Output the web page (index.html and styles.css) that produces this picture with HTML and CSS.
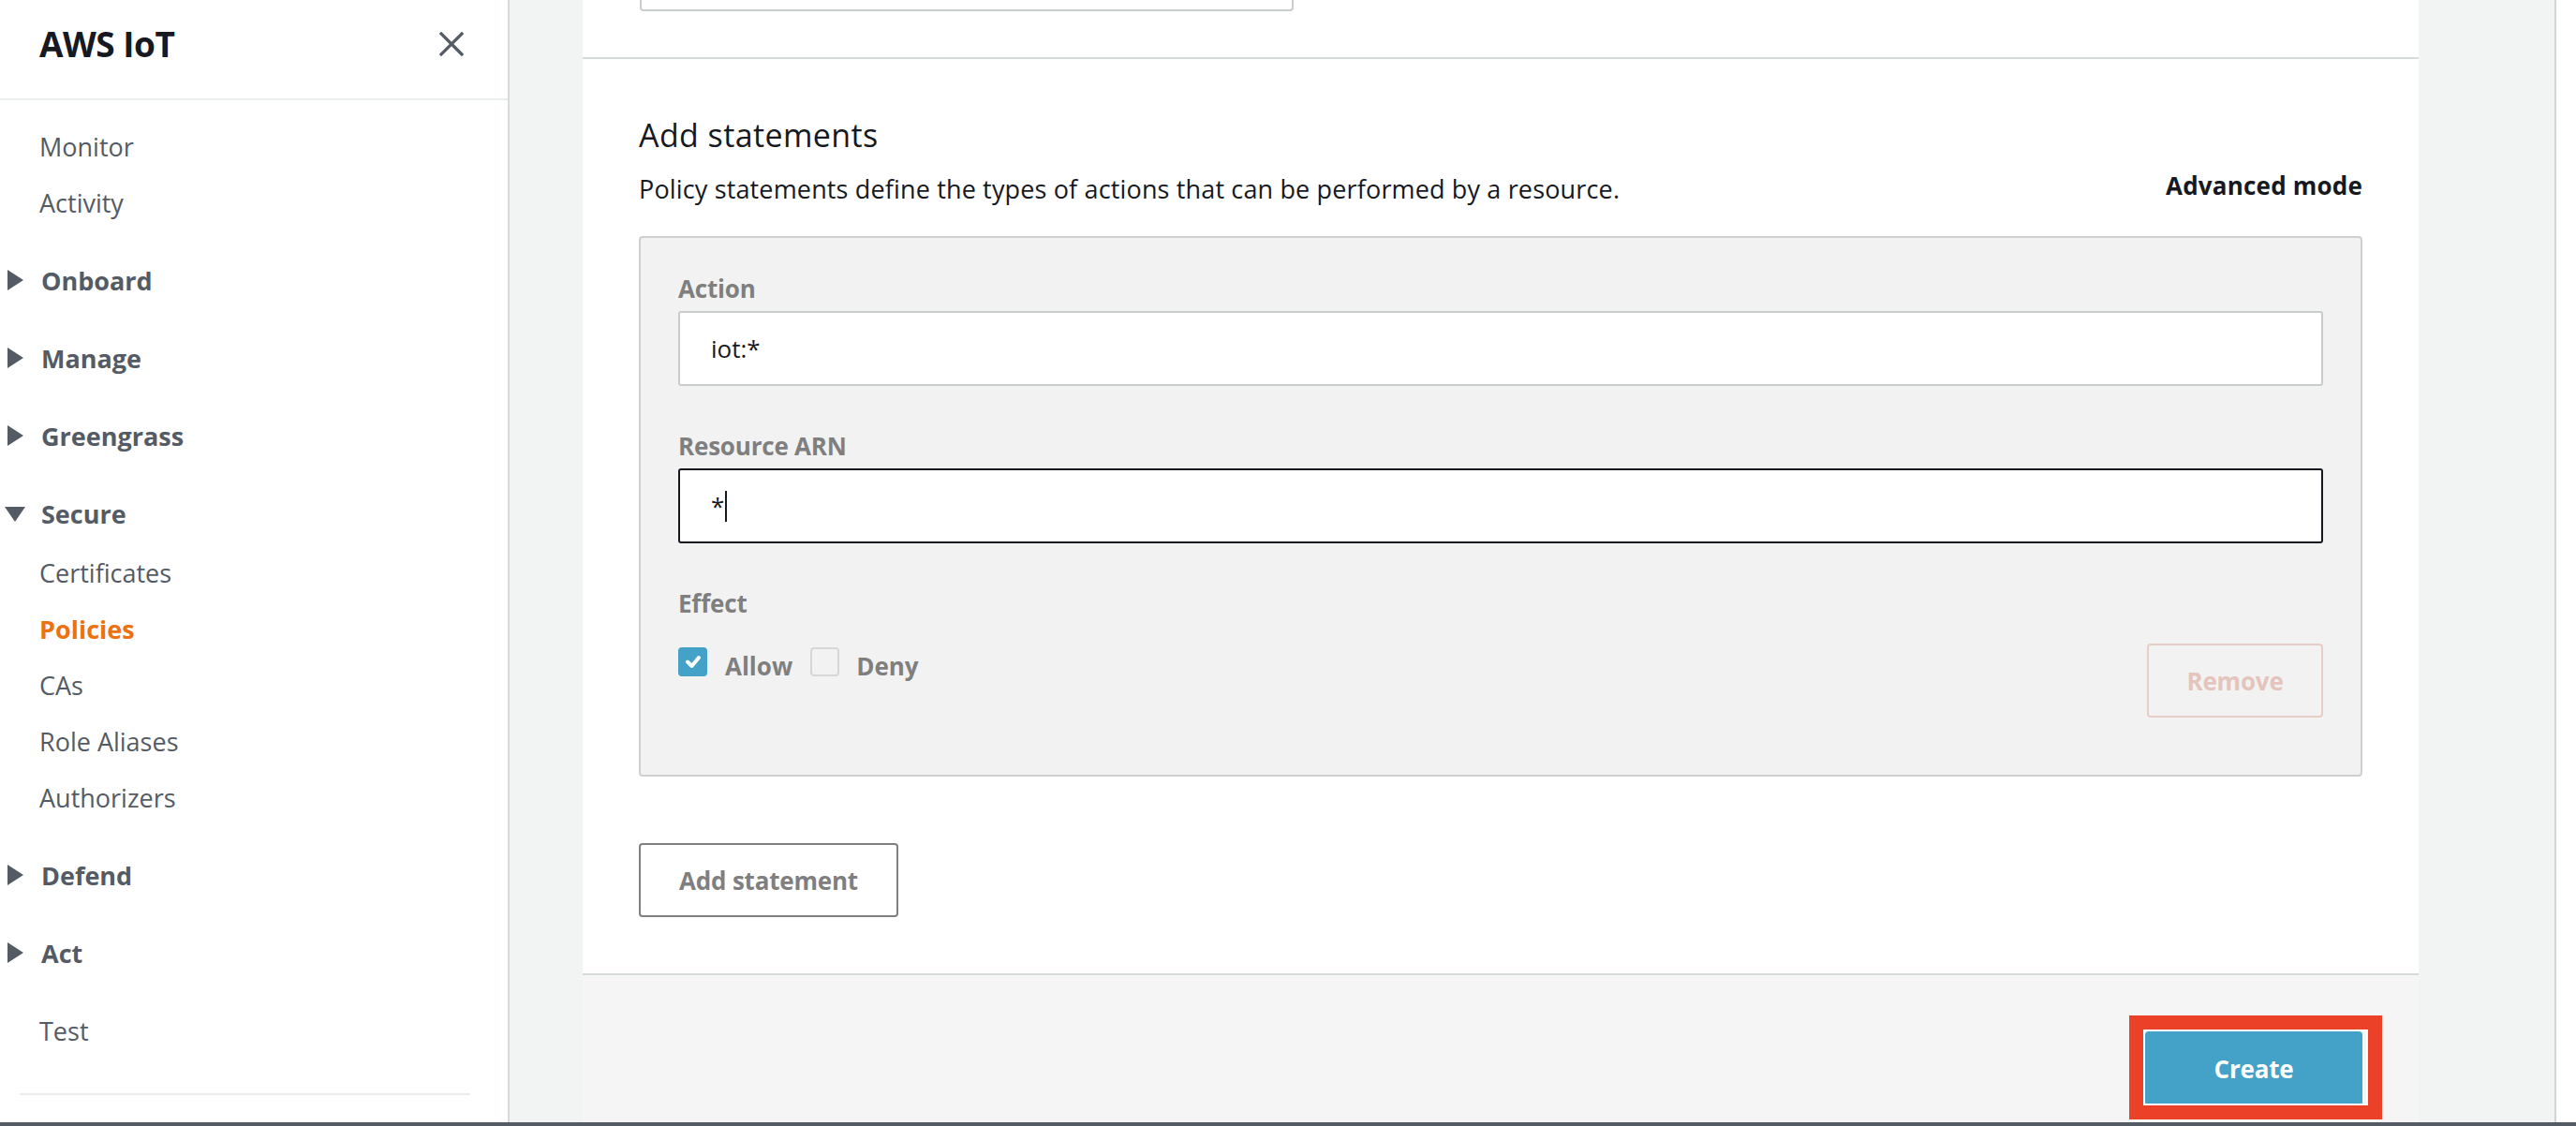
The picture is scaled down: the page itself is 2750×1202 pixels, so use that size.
FILE: index.html
```html
<!DOCTYPE html>
<html lang="en">
<head>
<meta charset="utf-8">
<title>AWS IoT - Create a policy</title>
<link rel="stylesheet" href="styles.css">
</head>
<body>
<div class="app">
  <div class="main-row">
    <aside class="sidebar">
      <div class="side-header">
        <span class="side-title">AWS IoT</span>
        <svg class="close-icon" viewBox="0 0 26 26" width="26" height="26" aria-hidden="true">
          <path d="M2 2 L24 24 M24 2 L2 24" stroke="#545b64" stroke-width="3.2" stroke-linecap="square" fill="none"/>
        </svg>
      </div>
      <nav class="nav">
        <a class="nav-item">Monitor</a>
        <a class="nav-item">Activity</a>
        <a class="nav-section"><span class="caret caret-right"></span>Onboard</a>
        <a class="nav-section"><span class="caret caret-right"></span>Manage</a>
        <a class="nav-section"><span class="caret caret-right"></span>Greengrass</a>
        <a class="nav-section open"><span class="caret caret-down"></span>Secure</a>
        <a class="nav-item">Certificates</a>
        <a class="nav-item active">Policies</a>
        <a class="nav-item">CAs</a>
        <a class="nav-item">Role Aliases</a>
        <a class="nav-item">Authorizers</a>
        <a class="nav-section"><span class="caret caret-right"></span>Defend</a>
        <a class="nav-section"><span class="caret caret-right"></span>Act</a>
        <a class="nav-item spaced">Test</a>
        <div class="nav-divider"></div>
      </nav>
    </aside>

    <main class="content">
      <div class="panel">
        <div class="section-top">
          <div class="stub-input"></div>
        </div>

        <section class="statements">
          <h2 class="heading">Add statements</h2>
          <div class="desc-row">
            <p class="desc">Policy statements define the types of actions that can be performed by a resource.</p>
            <a class="advanced">Advanced mode</a>
          </div>

          <div class="statement-box">
            <div class="field-label">Action</div>
            <div class="text-input">iot:*</div>

            <div class="field-label gap">Resource ARN</div>
            <div class="text-input focused">*<span class="cursor"></span></div>

            <div class="field-label gap">Effect</div>
            <div class="effect-row">
              <div class="checks">
                <span class="checkbox checked">
                  <svg viewBox="0 0 30 31" width="30" height="31" aria-hidden="true">
                    <path d="M9 15.5 L13.5 20 L21 11" stroke="#fff" stroke-width="4" fill="none" stroke-linecap="round" stroke-linejoin="round"/>
                  </svg>
                </span>
                <span class="check-label">Allow</span>
                <span class="checkbox"></span>
                <span class="check-label">Deny</span>
              </div>
              <button class="btn btn-remove">Remove</button>
            </div>
          </div>

          <button class="btn btn-add">Add statement</button>
        </section>

        <footer class="panel-footer">
          <div class="create-wrap">
            <button class="btn btn-create">Create</button>
            <span class="highlight"></span>
          </div>
        </footer>
      </div>
    </main>
    <div class="rail"></div>
  </div>
  <div class="bottom-bar"></div>
</div>
</body>
</html>
```

FILE: styles.css
```css
* { box-sizing: border-box; }

html, body {
  margin: 0;
  padding: 0;
  background: #ffffff;
}

body {
  font-family: "Open Sans", "Noto Sans", "Liberation Sans", sans-serif;
  color: #16191f;
}

.app {
  width: 2750px;
  height: 1202px;
  display: flex;
  flex-direction: column;
  overflow: hidden;
}

.main-row {
  flex: 1;
  display: flex;
  min-height: 0;
}

/* Sidebar */
.sidebar {
  width: 544px;
  flex: none;
  background: #ffffff;
  border-right: 2px solid #d5dbdb;
  display: flex;
  flex-direction: column;
}

.side-header {
  height: 107px;
  border-bottom: 2px solid #eaeded;
  display: flex;
  align-items: center;
  justify-content: space-between;
  padding: 0 47px 12px 42px;
}

.side-title {
  font-size: 37px;
  font-weight: 700;
  color: #16191f;
  letter-spacing: -0.5px;
}

.close-icon { display: block; }

.nav {
  display: flex;
  flex-direction: column;
  padding-top: 19px;
}

.nav-item,
.nav-section {
  display: flex;
  align-items: center;
  height: 60px;
  padding-left: 42px;
  font-size: 27px;
  color: #545b64;
  position: relative;
}

.nav-section {
  font-weight: 700;
  margin-top: 23px;
  padding-left: 44px;
}

.nav-section.open { margin-bottom: 3px; }

.nav-item.spaced { margin-top: 23px; }

.nav-item.active {
  color: #ec7211;
  font-weight: 700;
}

.caret {
  position: absolute;
  width: 0;
  height: 0;
}

.caret-right {
  left: 8px;
  top: 19px;
  border-top: 11px solid transparent;
  border-bottom: 11px solid transparent;
  border-left: 17px solid #545b64;
}

.caret-down {
  left: 5px;
  top: 23px;
  border-left: 11px solid transparent;
  border-right: 11px solid transparent;
  border-top: 16px solid #545b64;
}

.nav-divider {
  margin: 37px 0 0 21px;
  width: 481px;
  height: 2px;
  background: #eaeded;
}

/* Content */
.content {
  width: 2183px;
  flex: none;
  background: #f2f3f3;
  padding-left: 78px;
  display: flex;
}

.rail {
  flex: 1;
  border-left: 2px solid #d0d4d4;
  background: #ffffff;
}

.panel {
  width: 1960px;
  background: #ffffff;
  display: flex;
  flex-direction: column;
}

.section-top {
  height: 63px;
  border-bottom: 2px solid #d5dbdb;
  padding-left: 61px;
}

.stub-input {
  width: 698px;
  height: 12px;
  border: 2px solid #c8cdcd;
  border-top: none;
  border-radius: 0 0 4px 4px;
}

.statements {
  padding: 57px 60px 60px 60px;
  display: flex;
  flex-direction: column;
  align-items: flex-start;
}

.heading {
  margin: 0;
  font-size: 34px;
  line-height: 48px;
  font-weight: 400;
  color: #16191f;
  letter-spacing: 0.4px;
}

.desc-row {
  width: 100%;
  margin-top: 14px;
  display: flex;
  justify-content: space-between;
  align-items: flex-start;
}

.desc {
  margin: 0;
  font-size: 27px;
  line-height: 40px;
  color: #16191f;
  letter-spacing: 0.15px;
}

.advanced {
  font-size: 26px;
  line-height: 32px;
  font-weight: 700;
  color: #16191f;
  letter-spacing: 0.2px;
}

.statement-box {
  width: 100%;
  margin-top: 30px;
  background: #f2f2f2;
  border: 2px solid #cfcfcf;
  border-radius: 4px;
  padding: 36px 40px 61px 40px;
}

.field-label {
  font-size: 26px;
  line-height: 36px;
  font-weight: 700;
  color: #7f7f7f;
  letter-spacing: -0.2px;
}

.field-label.gap { margin-top: 46px; }

.text-input {
  margin-top: 6px;
  height: 80px;
  background: #ffffff;
  border: 2px solid #c9cccc;
  border-radius: 3px;
  padding-left: 33px;
  display: flex;
  align-items: center;
  font-size: 26px;
  color: #16191f;
}

.text-input.focused {
  border-color: #16191f;
}

.cursor {
  display: inline-block;
  width: 2px;
  height: 33px;
  background: #16191f;
  margin-left: 1px;
}

.effect-row {
  margin-top: 25px;
  display: flex;
  justify-content: space-between;
  align-items: flex-start;
}

.checks {
  display: flex;
  align-items: center;
  margin-top: 4px;
  height: 31px;
}

.checkbox {
  width: 31px;
  height: 31px;
  border: 2px solid #d7d7d7;
  border-radius: 4px;
  background: #f2f2f2;
  display: flex;
  align-items: center;
  justify-content: center;
}

.checkbox.checked {
  background: #44a1c7;
  border-color: #44a1c7;
}

.checkbox.checked svg { display: block; margin: -2px; }

.check-label {
  font-size: 26px;
  font-weight: 700;
  color: #7f7f7f;
  margin: 8px 19px 0 19px;
  letter-spacing: 0;
}

.check-label:last-child { margin-right: 0; margin-left: 18px; }

.btn {
  font-family: "Open Sans", "Noto Sans", "Liberation Sans", sans-serif;
  font-size: 26px;
  font-weight: 700;
  border-radius: 4px;
  cursor: pointer;
  letter-spacing: -0.2px;
}

.btn-remove {
  width: 188px;
  height: 79px;
  background: transparent;
  border: 2px solid #e8cdc7;
  color: #e4c4bc;
}

.btn-add {
  margin-top: 71px;
  width: 277px;
  height: 79px;
  background: #ffffff;
  border: 2px solid #7f7f7f;
  color: #7f7f7f;
}

.panel-footer {
  flex: 1;
  background: #f5f5f5;
  border-top: 2px solid #d5dbdb;
  display: flex;
  justify-content: flex-end;
  align-items: flex-start;
  padding: 60px 60px 0 0;
}

.create-wrap {
  position: relative;
}

.btn-create {
  display: block;
  width: 232px;
  height: 79px;
  background: #44a1c7;
  border: none;
  color: #ffffff;
}

.highlight {
  position: absolute;
  left: -17px;
  top: -17px;
  right: -21px;
  bottom: -15px;
  border: 15px solid #ea4128;
  box-shadow: inset 0 0 0 2px #ffffff;
  pointer-events: none;
}

.bottom-bar {
  height: 4px;
  flex: none;
  background: #545b64;
}
```
